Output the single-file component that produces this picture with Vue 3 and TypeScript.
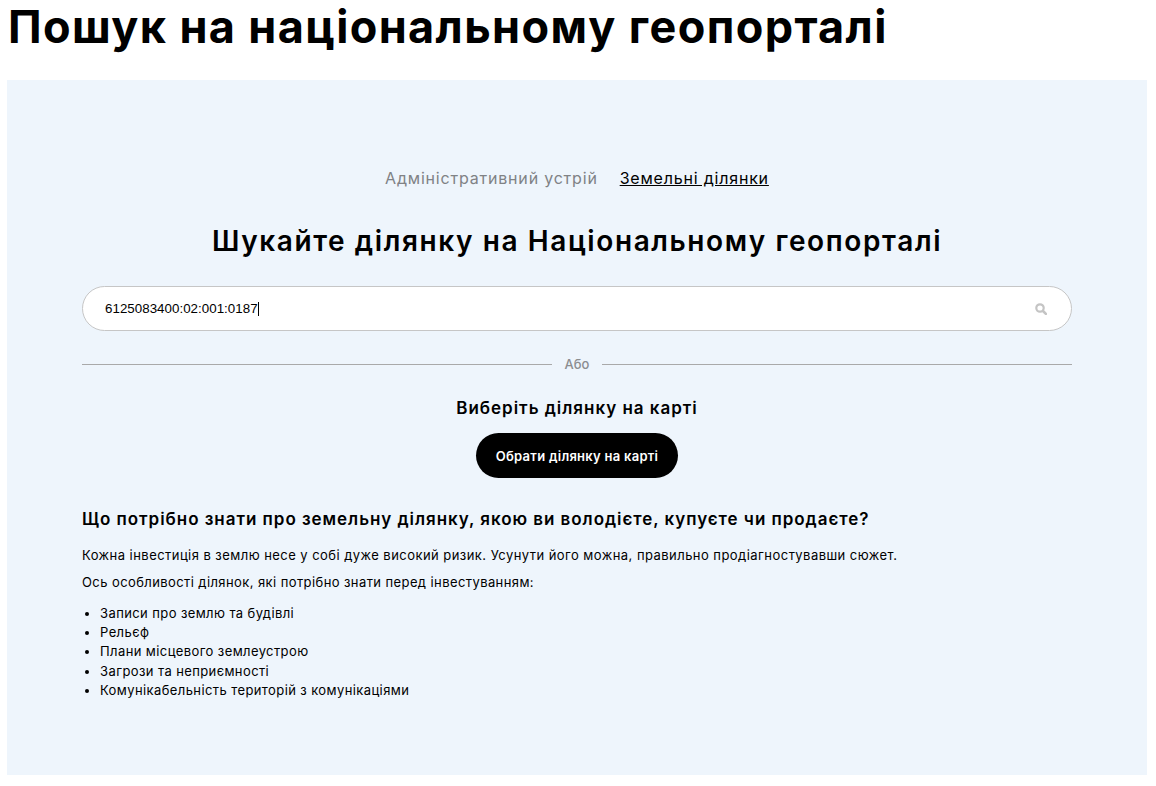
<script setup lang="ts">
const features: string[] = [
  'Записи про землю та будівлі',
  'Рельєф',
  'Плани місцевого землеустрою',
  'Загрози та неприємності',
  'Комунікабельність територій з комунікаціями',
]
</script>

<template>
  <div class="page">
    <h1 class="title">Пошук на національному геопорталі</h1>
    <section class="panel">
      <nav class="tabs">
        <span class="tab">Адміністративний устрій</span>
        <span class="tab tab--active">Земельні ділянки</span>
      </nav>
      <h2 class="heading">Шукайте ділянку на Національному геопорталі</h2>
      <div class="search">
        <span class="search-value">6125083400:02:001:0187</span>
        <i class="caret" />
        <svg class="search-icon" viewBox="0 0 12 12" aria-hidden="true">
          <circle cx="5" cy="5" r="3.7" fill="none" stroke="#c4c4c4" stroke-width="2.2" />
          <path d="M8 8 L10.9 10.9" stroke="#c4c4c4" stroke-width="2.6" stroke-linecap="round" />
        </svg>
      </div>
      <div class="divider"><span>Або</span></div>
      <h3 class="map-title">Виберіть ділянку на карті</h3>
      <div class="map-action">
        <button class="map-btn" type="button">Обрати ділянку на карті</button>
      </div>
      <h3 class="info-title">Що потрібно знати про земельну ділянку, якою ви володієте, купуєте чи продаєте?</h3>
      <p class="info-text">Кожна інвестиція в землю несе у собі дуже високий ризик. Усунути його можна, правильно продіагностувавши сюжет.</p>
      <p class="info-text info-text--tight">Ось особливості ділянок, які потрібно знати перед інвестуванням:</p>
      <ul class="info-list">
        <li v-for="item in features" :key="item">{{ item }}</li>
      </ul>
    </section>
  </div>
</template>

<style>
html, body {
  margin: 0;
  background: #fff;
}
</style>

<style scoped>
.page {
  height: 786px;
  overflow: hidden;
  box-sizing: border-box;
  padding: 0 9px 0 7px;
  font-family: Inter, "Noto Sans", sans-serif;
  color: #000;
}

.title {
  margin: 0;
  height: 80px;
  padding: 0 0 0 1px;
  font-size: 45px;
  line-height: 54px;
  font-weight: 700;
  letter-spacing: 1.38px;
}

.panel {
  box-sizing: border-box;
  height: 695px;
  padding: 87px 75px 0;
  background: #eef5fc;
}

.tabs {
  display: flex;
  justify-content: center;
  gap: 22px;
  font-size: 16px;
  line-height: 22px;
  font-weight: 400;
  letter-spacing: 0.8px;
}

.tab {
  color: #808285;
}

.tab--active {
  color: #000;
  text-decoration: underline;
}

.heading {
  margin: 34px 0 0;
  text-align: center;
  font-size: 28px;
  line-height: 36px;
  font-weight: 600;
  letter-spacing: 1.6px;
}

.search {
  display: flex;
  align-items: center;
  box-sizing: border-box;
  height: 45px;
  margin-top: 27px;
  padding: 0 24px 0 22px;
  background: #fff;
  border: 1px solid #c6c6c6;
  border-radius: 23px;
  font-family: "Liberation Sans", Arial, sans-serif;
  font-size: 13.333px;
  letter-spacing: 0.03px;
}

.caret {
  display: block;
  width: 1px;
  height: 14px;
  background: #000;
}

.search-icon {
  width: 12px;
  height: 12px;
  margin-left: auto;
}

.divider {
  display: flex;
  align-items: center;
  gap: 12px;
  margin-top: 24px;
  font-size: 13px;
  line-height: 18px;
  font-weight: 500;
  letter-spacing: 0.1px;
  color: #8b8d90;
}

.divider::before,
.divider::after {
  content: "";
  flex: 1;
  height: 1px;
  background: #a9a9a9;
}

.map-title {
  margin: 23px 0 0;
  text-align: center;
  font-size: 17px;
  line-height: 24px;
  font-weight: 600;
  letter-spacing: 0.98px;
}

.map-action {
  display: flex;
  justify-content: center;
  margin-top: 13px;
}

.map-btn {
  height: 45px;
  padding: 0 20px;
  border: 0;
  border-radius: 23px;
  background: #000;
  color: #fff;
  font-family: inherit;
  font-size: 13px;
  font-weight: 600;
  letter-spacing: 0.27px;
}

.info-title {
  margin: 29px 0 0;
  font-size: 17px;
  line-height: 24px;
  font-weight: 600;
  letter-spacing: 0.955px;
}

.info-text {
  margin: 15px 0 0;
  font-size: 13px;
  line-height: 19px;
  letter-spacing: 0.45px;
}

.info-text--tight {
  margin-top: 8px;
  letter-spacing: 0.41px;
}

.info-list {
  margin: 12px 0 0;
  padding: 0 0 0 18px;
  font-size: 13px;
  line-height: 19.2px;
  letter-spacing: 0.4px;
}
</style>
